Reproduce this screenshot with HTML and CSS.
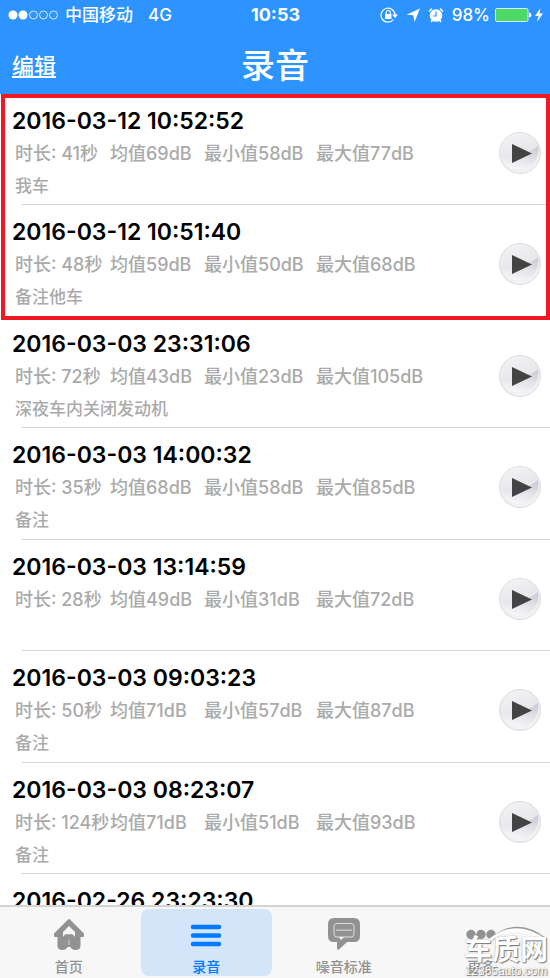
FILE: index.html
```html
<!DOCTYPE html>
<html lang="zh-CN">
<head>
<meta charset="utf-8">
<meta name="viewport" content="width=device-width, initial-scale=1">
<title>录音</title>
<link rel="stylesheet" href="styles.css">
</head>
<body>
<svg class="defs" aria-hidden="true">
  <defs>
    <linearGradient id="disc" x1="0.2" y1="0" x2="0.6" y2="1">
      <stop offset="0" stop-color="#f4f4f6"/>
      <stop offset="0.5" stop-color="#e8e8ec"/>
      <stop offset="1" stop-color="#f3f3f6"/>
    </linearGradient>
    <linearGradient id="shade" x1="0.9" y1="0.1" x2="0.5" y2="1">
      <stop offset="0" stop-color="#cdcdd8"/>
      <stop offset="0.5" stop-color="#e2e2e9"/>
      <stop offset="1" stop-color="#f6f6f8"/>
    </linearGradient>
    <symbol id="play" viewBox="0 0 42 42">
      <circle cx="21" cy="21" r="20.500" fill="url(#disc)" stroke="#dddde0"/>
      <path d="M1.500 26C16 26 29 22 39 14A19.800 19.800 0 0 1 2 27Z" fill="url(#shade)"/>
      <path d="M13 12L33 21.500L13 31Z" fill="#434343"/>
    </symbol>
  </defs>
</svg>
<div class="app">
  <header class="header">
    <div class="status">
      <div class="status-left">
        <svg class="signal" viewBox="0 0 50 10" aria-hidden="true">
          <g fill="#fff"><circle cx="5" cy="5" r="4.500"/><circle cx="15" cy="5" r="4.500"/></g>
          <g fill="none" stroke="#fff" stroke-width="0.800"><circle cx="25.500" cy="5" r="4"/><circle cx="35.500" cy="5" r="4"/><circle cx="45.500" cy="5" r="4"/></g>
        </svg>
        <span>中国移动</span><span class="network">4G</span>
      </div>
      <time class="clock">10:53</time>
      <div class="status-right">
        <svg class="lock" viewBox="0 0 18 16" aria-hidden="true">
          <path d="M13.500 12.500A7 7 0 1 1 15 8" fill="none" stroke="#fff" stroke-width="1.200"/>
          <path d="M12 7.500H18L15 11Z" fill="#fff"/>
          <rect x="5" y="7" width="6.500" height="5" fill="#fff"/>
          <path d="M6.300 7V5.500a2 2 0 0 1 4 0V7" fill="none" stroke="#fff" stroke-width="1.200"/>
        </svg>
        <svg class="arrow" viewBox="0 0 14 14" aria-hidden="true"><path d="M14 0.500L8.500 14L7.300 7.200L0.500 6.800Z" fill="#fff"/></svg>
        <svg class="alarm" viewBox="0 0 16 16" aria-hidden="true">
          <circle cx="8" cy="8.500" r="6.300" fill="#fff"/>
          <path d="M1 4.500L4 1.500M15 4.500L12 1.500M3 15L4.500 13M13 15L11.500 13" stroke="#fff" stroke-width="1.500"/>
          <path d="M8 4.500V9H5" fill="none" stroke="#2d93ff" stroke-width="1.200"/>
        </svg>
        <span>98%</span>
        <svg class="battery" viewBox="0 0 38 14" aria-hidden="true">
          <rect x="0.500" y="0.500" width="32.500" height="13" rx="1.500" fill="#4cd964" stroke="#d5e9ff"/>
          <path d="M34 4.500a2.500 2.500 0 0 1 0 5Z" fill="#fff"/>
        </svg>
        <svg class="bolt" viewBox="0 0 8 14" aria-hidden="true"><path d="M5.500 0L0 8H3.500L2 14L8 5.500H4.500Z" fill="#fff"/></svg>
      </div>
    </div>
    <div class="nav">
      <a class="edit" href="#edit">编辑</a>
      <h1 class="heading">录音</h1>
    </div>
  </header>

  <main class="content">
    <ul class="list marked">
      <li class="row">
        <div class="info"><h2 class="date">2016-03-12 10:52:52</h2>
          <p class="stats"><span>时长: 41秒</span><span>均值69dB</span><span>最小值58dB</span><span>最大值77dB</span></p>
          <p class="note">我车</p></div>
        <button class="play" type="button" aria-label="播放"><svg><use href="#play"/></svg></button>
      </li>
      <li class="row">
        <div class="info"><h2 class="date">2016-03-12 10:51:40</h2>
          <p class="stats"><span>时长: 48秒</span><span>均值59dB</span><span>最小值50dB</span><span>最大值68dB</span></p>
          <p class="note">备注他车</p></div>
        <button class="play" type="button" aria-label="播放"><svg><use href="#play"/></svg></button>
      </li>
    </ul>
    <ul class="list">
      <li class="row">
        <div class="info"><h2 class="date">2016-03-03 23:31:06</h2>
          <p class="stats"><span>时长: 72秒</span><span>均值43dB</span><span>最小值23dB</span><span>最大值105dB</span></p>
          <p class="note">深夜车内关闭发动机</p></div>
        <button class="play" type="button" aria-label="播放"><svg><use href="#play"/></svg></button>
      </li>
      <li class="row">
        <div class="info"><h2 class="date">2016-03-03 14:00:32</h2>
          <p class="stats"><span>时长: 35秒</span><span>均值68dB</span><span>最小值58dB</span><span>最大值85dB</span></p>
          <p class="note">备注</p></div>
        <button class="play" type="button" aria-label="播放"><svg><use href="#play"/></svg></button>
      </li>
      <li class="row">
        <div class="info"><h2 class="date">2016-03-03 13:14:59</h2>
          <p class="stats"><span>时长: 28秒</span><span>均值49dB</span><span>最小值31dB</span><span>最大值72dB</span></p>
          <p class="note"></p></div>
        <button class="play" type="button" aria-label="播放"><svg><use href="#play"/></svg></button>
      </li>
      <li class="row">
        <div class="info"><h2 class="date">2016-03-03 09:03:23</h2>
          <p class="stats"><span>时长: 50秒</span><span>均值71dB</span><span>最小值57dB</span><span>最大值87dB</span></p>
          <p class="note">备注</p></div>
        <button class="play" type="button" aria-label="播放"><svg><use href="#play"/></svg></button>
      </li>
      <li class="row">
        <div class="info"><h2 class="date">2016-03-03 08:23:07</h2>
          <p class="stats"><span>时长: 124秒</span><span>均值71dB</span><span>最小值51dB</span><span>最大值93dB</span></p>
          <p class="note">备注</p></div>
        <button class="play" type="button" aria-label="播放"><svg><use href="#play"/></svg></button>
      </li>
      <li class="row">
        <div class="info"><h2 class="date">2016-02-26 23:23:30</h2></div>
      </li>
    </ul>
  </main>

  <nav class="tabs">
    <a class="tab" href="#home">
      <svg viewBox="0 0 34 34" aria-hidden="true">
        <path d="M17 3L3 17V19H6.500V29Q7 32 10.500 32Q14 32 15 29H19Q20 32 23.500 32Q27 32 27.500 29V19H31V17Z" fill="#929292" stroke="#929292" stroke-width="2" stroke-linejoin="round"/>
        <path d="M17 9L11 15V20Q13 16 17 17.500Q21 16 23 20V15Z" fill="#f7f7f7"/>
        <path d="M17 23V28" stroke="#c4c4c4" stroke-width="1.200" stroke-linecap="round"/>
      </svg>
      <span>首页</span>
    </a>
    <a class="tab active" href="#records" aria-current="page">
      <svg viewBox="0 0 34 34" aria-hidden="true"><path d="M4 10H30M4 18.500H30M4 27H30" stroke="#007aff" stroke-width="4.500" stroke-linecap="round"/></svg>
      <span>录音</span>
    </a>
    <a class="tab" href="#standards">
      <svg viewBox="0 0 34 34" aria-hidden="true">
        <path d="M7 1H27Q33 1 33 7V19Q33 25 27 25H20L12 32.500Q10 33.500 10 31V25H7Q1 25 1 19V7Q1 1 7 1Z" fill="#929292"/>
        <rect x="7" y="6.500" width="20" height="13.500" rx="3" fill="none" stroke="#dedede" stroke-width="1"/>
        <path d="M9 13.200H25" stroke="#dedede" stroke-width="1"/>
        <path d="M12 20L14 23L17 20" fill="#f7f7f7"/>
      </svg>
      <span>噪音标准</span>
    </a>
    <a class="tab" href="#more">
      <svg viewBox="0 0 34 34" aria-hidden="true"><g fill="#929292"><circle cx="7" cy="17.500" r="4.700"/><circle cx="17" cy="17.500" r="4.700"/><circle cx="27" cy="17.500" r="4.700"/></g></svg>
      <span>更多</span>
    </a>
  </nav>
  <div class="watermark">
    <svg class="swoosh" viewBox="0 0 86 16" aria-hidden="true"><path d="M28 14Q54 -9 83 14" fill="none" stroke="#999" stroke-width="3.500"/><path d="M27 14Q54 -7 83 15" fill="none" stroke="#fff" stroke-width="3"/></svg>
    <span class="brand">车质网</span>
    <span class="site">12365auto.com</span>
  </div>
</div>
</body>
</html>
```
FILE: styles.css
```css
* { box-sizing: border-box; }

body {
  margin: 0;
  background: #fff;
  color: #000;
  font-family: Inter, "Noto Sans CJK SC", sans-serif;
}

h1, h2, p, ul { margin: 0; padding: 0; }
a { text-decoration: none; }
svg { display: block; }
.defs { position: absolute; width: 0; height: 0; }

.app {
  position: relative;
  display: flex;
  flex-direction: column;
  height: 100vh;
  overflow: hidden;
}

/* Header */
.header { flex: none; background: #2d93ff; color: #fff; }

.status, .nav {
  display: grid;
  grid-template-columns: 1fr auto 1fr;
  align-items: center;
}
.status { height: 30px; padding: 0 7px 0 8px; font-size: 17px; line-height: 20px; font-weight: 500; }
.status-left, .status-right { display: flex; align-items: center; }
.status-right { justify-content: flex-end; }
.signal { width: 50px; height: 10px; margin-right: 7px; }
.network { margin-left: 15px; }
.clock { font-size: 18px; font-weight: 700; }
.lock { width: 18px; height: 16px; margin-right: 8px; }
.arrow { width: 14px; height: 14px; margin-right: 8px; }
.alarm { width: 16px; height: 16px; margin-right: 8px; }
.battery { width: 38px; height: 14px; margin: 0 2px 0 5px; }
.bolt { width: 8px; height: 14px; }

.nav { height: 64px; padding: 8px 12px 0; }
.edit { color: #fff; font-size: 22px; line-height: 32px; font-weight: 500; text-decoration: underline; }
.heading { grid-column: 2; font-size: 34px; line-height: 48px; font-weight: 500; }

/* Recordings */
.content { flex: 1; min-height: 0; overflow: hidden; }
.list { list-style: none; }
.marked { position: relative; }
.marked::after {
  content: "";
  position: absolute;
  z-index: 1;
  inset: 0 0 -3px 1px;
  border: 4px solid #f01823;
  pointer-events: none;
}

.row {
  position: relative;
  display: flex;
  align-items: flex-start;
  justify-content: space-between;
  height: 111px;
  padding: 11px 9px 0 12px;
}
.row:nth-child(even) { height: 112px; }
.row::after {
  content: "";
  position: absolute;
  inset: auto 0 0 22px;
  border-bottom: 1px solid #d4d4d6;
}
.marked .row:last-child::after { display: none; }
.date { font-size: 23px; line-height: 32px; font-weight: 600; }
.stats, .note { padding-left: 3px; color: #aaa; line-height: 32px; font-weight: 500; white-space: nowrap; }
.stats { display: grid; grid-template-columns: 95px 94px 112px auto; padding-top: 1px; font-size: 18px; }
.note { font-size: 17px; }
.play {
  flex: none;
  width: 42px;
  height: 42px;
  margin-top: 27px;
  padding: 0;
  border: 0;
  background: none;
}
.play svg { width: 42px; height: 42px; }

/* Tab bar */
.tabs {
  flex: none;
  display: grid;
  grid-template-columns: repeat(4, 1fr);
  border-top: 2px solid #d4d4d4;
  background: #f7f7f7;
}
.tab {
  display: flex;
  flex-direction: column;
  align-items: center;
  margin: 2px 3px;
  padding-top: 8px;
  border-radius: 8px;
  color: #929292;
  font-size: 14px;
  line-height: 18px;
  font-weight: 500;
}
.tab svg { width: 34px; height: 34px; margin-bottom: 7px; }
.active { background: #d3e5f9; color: #007aff; }

/* Watermark */
.watermark {
  position: absolute;
  right: 1px;
  bottom: 0;
  width: 86px;
  color: #fff;
  text-shadow: 1px 1px 1px #777, 0 0 1px #888;
  pointer-events: none;
}
.brand, .site { position: relative; display: block; text-align: center; white-space: nowrap; }
.brand { font-size: 28px; line-height: 28px; font-weight: 700; }
.site { font-family: "Liberation Sans", sans-serif; font-size: 12px; line-height: 14px; }
.swoosh { position: absolute; top: -10px; width: 86px; height: 16px; }
```
